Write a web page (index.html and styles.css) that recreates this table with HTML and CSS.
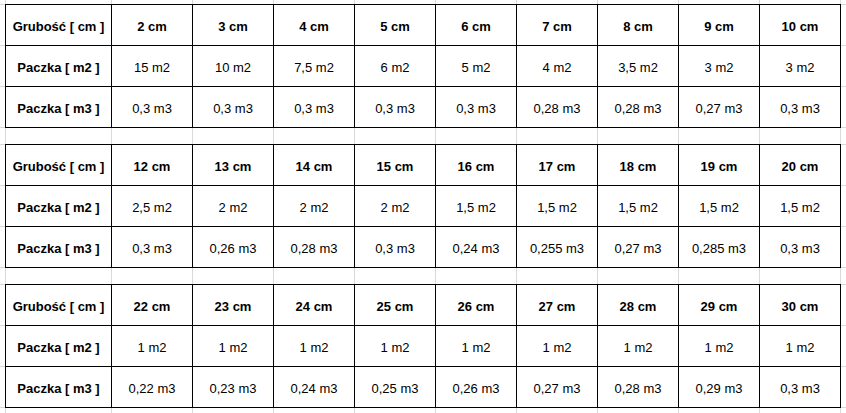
FILE: index.html
```html
<!DOCTYPE html>
<html lang="pl">
<head>
<meta charset="utf-8">
<title>Paczki</title>
<link rel="stylesheet" href="styles.css">
</head>
<body>
<div class="sheet">
  <div class="gap g-top"><i></i><i></i><i></i><i></i><i></i><i></i><i></i><i></i><i></i><i></i><i></i><b></b></div>
  <div class="band">
    <div class="gutter"></div>
    <table class="grid">
      <tr class="first"><th>Grubość [ cm ]</th><th>2 cm</th><th>3 cm</th><th>4 cm</th><th>5 cm</th><th>6 cm</th><th>7 cm</th><th>8 cm</th><th>9 cm</th><th>10 cm</th></tr>
      <tr><th>Paczka [ m2 ]</th><td>15 m2</td><td>10 m2</td><td>7,5 m2</td><td>6 m2</td><td>5 m2</td><td>4 m2</td><td>3,5 m2</td><td>3 m2</td><td>3 m2</td></tr>
      <tr><th>Paczka [ m3 ]</th><td>0,3 m3</td><td>0,3 m3</td><td>0,3 m3</td><td>0,3 m3</td><td>0,3 m3</td><td>0,28 m3</td><td>0,28 m3</td><td>0,27 m3</td><td>0,3 m3</td></tr>
    </table>
    <div class="gutter right"></div>
  </div>
  <div class="gap"><i></i><i></i><i></i><i></i><i></i><i></i><i></i><i></i><i></i><i></i><i></i><b></b></div>
  <div class="band">
    <div class="gutter"></div>
    <table class="grid">
      <tr class="first"><th>Grubość [ cm ]</th><th>12 cm</th><th>13 cm</th><th>14 cm</th><th>15 cm</th><th>16 cm</th><th>17 cm</th><th>18 cm</th><th>19 cm</th><th>20 cm</th></tr>
      <tr><th>Paczka [ m2 ]</th><td>2,5 m2</td><td>2 m2</td><td>2 m2</td><td>2 m2</td><td>1,5 m2</td><td>1,5 m2</td><td>1,5 m2</td><td>1,5 m2</td><td>1,5 m2</td></tr>
      <tr><th>Paczka [ m3 ]</th><td>0,3 m3</td><td>0,26 m3</td><td>0,28 m3</td><td>0,3 m3</td><td>0,24 m3</td><td>0,255 m3</td><td>0,27 m3</td><td>0,285 m3</td><td>0,3 m3</td></tr>
    </table>
    <div class="gutter right"></div>
  </div>
  <div class="gap"><i></i><i></i><i></i><i></i><i></i><i></i><i></i><i></i><i></i><i></i><i></i><b></b></div>
  <div class="band">
    <div class="gutter"></div>
    <table class="grid">
      <tr class="first"><th>Grubość [ cm ]</th><th>22 cm</th><th>23 cm</th><th>24 cm</th><th>25 cm</th><th>26 cm</th><th>27 cm</th><th>28 cm</th><th>29 cm</th><th>30 cm</th></tr>
      <tr><th>Paczka [ m2 ]</th><td>1 m2</td><td>1 m2</td><td>1 m2</td><td>1 m2</td><td>1 m2</td><td>1 m2</td><td>1 m2</td><td>1 m2</td><td>1 m2</td></tr>
      <tr><th>Paczka [ m3 ]</th><td>0,22 m3</td><td>0,23 m3</td><td>0,24 m3</td><td>0,25 m3</td><td>0,26 m3</td><td>0,27 m3</td><td>0,28 m3</td><td>0,29 m3</td><td>0,3 m3</td></tr>
    </table>
    <div class="gutter right"></div>
  </div>
  <div class="gap g-bottom"><i></i><i></i><i></i><i></i><i></i><i></i><i></i><i></i><i></i><i></i><i></i><b></b></div>
</div>
</body>
</html>
```
FILE: styles.css
```css
html, body {
  margin: 0;
  padding: 0;
  background: #ffffff;
}

.sheet {
  width: 846px;
  height: 413px;
  overflow: hidden;
  font-family: "Liberation Sans", Arial, sans-serif;
  font-size: 13px;
  color: #000;
}

.gap {
  display: grid;
  grid-template-columns: 6px 106px repeat(9, 81px) 1fr;
  height: 16px;
}
.gap.g-top { height: 4px; }
.gap.g-bottom { height: 5px; }

.gap i {
  display: block;
  box-sizing: border-box;
  border-right: 1px solid #d9d9d9;
}
.gap b { display: block; }

.band {
  display: flex;
}

.gutter {
  width: 5px;
  flex: none;
  background: repeating-linear-gradient(to bottom, #d9d9d9 0 1px, transparent 1px 41px);
}
.gutter.right {
  flex: 1;
  width: auto;
}

.grid {
  border-collapse: separate;
  border-spacing: 0;
  table-layout: fixed;
  width: 836px;
  flex: none;
}

.grid th,
.grid td {
  box-sizing: border-box;
  height: 41px;
  padding: 2px 0 0;
  text-align: center;
  vertical-align: middle;
  border-right: 1px solid #000;
  border-bottom: 1px solid #000;
  white-space: nowrap;
  width: 81px;
}

.grid td {
  font-weight: normal;
}

.grid th {
  font-weight: bold;
}

.grid tr > :first-child {
  border-left: 1px solid #000;
  width: 107px;
}

.grid tr.first > * {
  border-top: 1px solid #000;
  height: 42px;
}
```
